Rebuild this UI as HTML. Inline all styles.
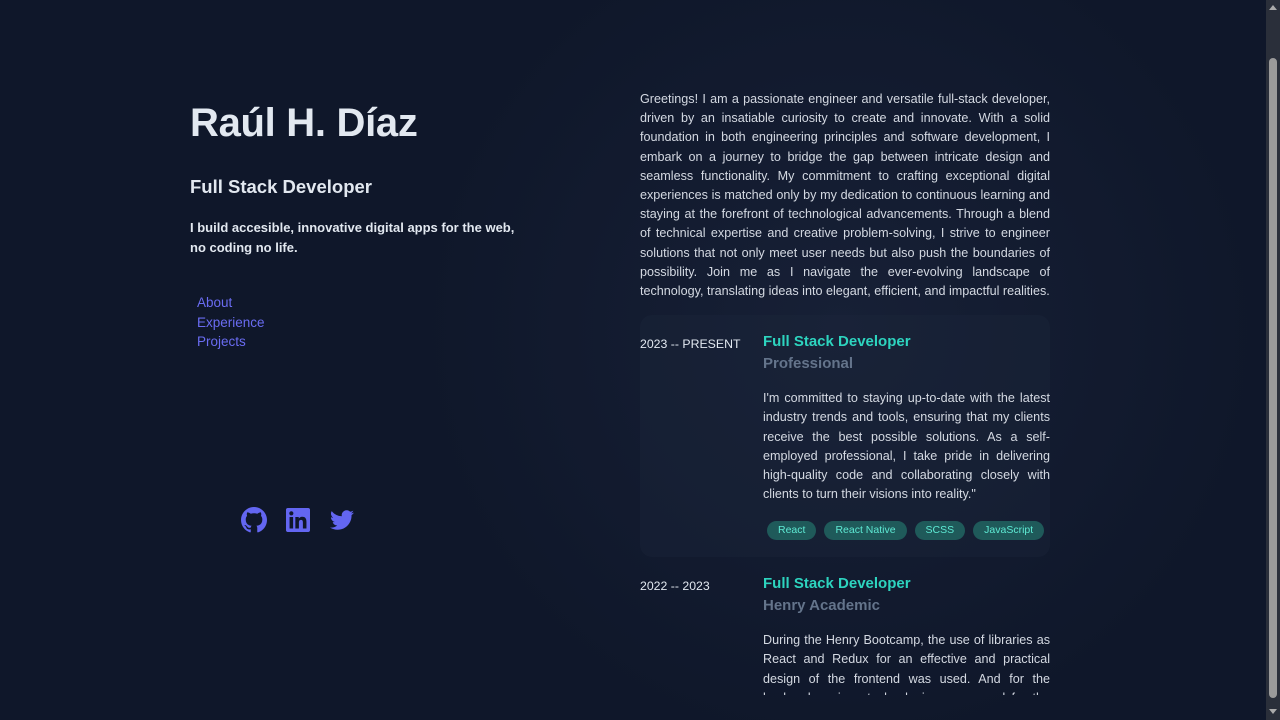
<!DOCTYPE html>
<html><head><meta charset="utf-8"><style>
*{margin:0;padding:0;box-sizing:border-box}
html,body{width:1280px;height:720px;overflow:hidden;background:#0f172a;font-family:"Liberation Sans",sans-serif;color:#e2e8f0}
body{background:radial-gradient(600px 600px at 840px 330px,#172036 0%,#0f172a 70%)}
.sb{position:absolute;right:0;top:0;width:14px;height:720px;background:#2a2f3a}
.sb i{position:absolute;left:3px;top:58px;width:8px;height:640px;background:#9a9a9a;border-radius:4px}
.sb b{position:absolute;left:3px;width:0;height:0;border-left:4px solid transparent;border-right:4px solid transparent}
h1{position:absolute;left:190px;top:101px;font-size:40px;font-weight:bold;color:#e2e8f0;letter-spacing:-0.3px}
h2{position:absolute;left:190px;top:176px;font-size:18.5px;font-weight:bold;color:#e2e8f0}
.tag{position:absolute;left:190px;top:218px;font-size:13px;font-weight:bold;line-height:19.5px;width:340px;color:#e2e8f0}
nav{position:absolute;left:197px;top:293px;font-size:13.5px;line-height:19.5px}
nav div{color:#6a6cf2}
.icons{position:absolute;left:241px;top:507px}
.icons svg{position:absolute;fill:#6366f1}
.right{position:absolute;left:640px;top:90px;width:410px;height:605px;overflow:hidden}
p{font-size:12.6px;line-height:19.2px;text-align:justify;color:#d4d9e2;font-weight:300}
.card{position:relative;margin-top:14px;border-radius:12px;background:rgba(30,41,59,.35);height:242px}
.date{position:absolute;left:0;top:22px;font-size:12.3px;color:#e2e8f0}
.c{position:absolute;left:123px;top:16px;width:287px}
.t{font-size:15px;font-weight:bold;color:#2dd4bf;line-height:22px}
.s{font-size:15px;font-weight:bold;color:#64748b;line-height:22px}
.c p{margin-top:14px}
.pills{margin-top:17px;display:flex;gap:8px;padding-left:4px;align-items:flex-start}
.pills span{white-space:nowrap;background:#1f5a5a;color:#5eead4;font-size:10.5px;padding:0 11px;border-radius:10px;line-height:19px;height:19px}
</style></head><body>
<h1>Raúl H. Díaz</h1>
<h2>Full Stack Developer</h2>
<div class="tag">I build accesible, innovative digital apps for the web, no coding no life.</div>
<nav><div>About</div><div>Experience</div><div>Projects</div></nav>
<div class="icons">
<svg style="left:0;top:0" width="26" height="26" viewBox="0 0 16 16"><path d="M8 0C3.58 0 0 3.58 0 8c0 3.540 2.29 6.53 5.47 7.59.4.07.55-.17.55-.38 0-.19-.01-.82-.01-1.49-2.01.37-2.530-.49-2.690-.94-.09-.23-.48-.94-.82-1.13-.28-.15-.68-.52-.01-.53.63-.01 1.08.58 1.23.82.72 1.21 1.87.87 2.33.66.07-.52.28-.87.51-1.07-1.78-.2-3.64-.89-3.64-3.95 0-.87.31-1.59.82-2.15-.08-.2-.36-1.02.08-2.12 0 0 .67-.21 2.2.82.64-.18 1.32-.27 2-.27.68 0 1.36.09 2 .27 1.53-1.04 2.2-.82 2.2-.82.44 1.1.16 1.92.08 2.12.51.56.82 1.27.82 2.15 0 3.07-1.87 3.75-3.65 3.95.29.25.54.73.54 1.48 0 1.07-.01 1.93-.01 2.2 0 .21.15.46.55.38A8.013 8.013 0 0016 8c0-4.42-3.58-8-8-8z"/></svg>
<svg style="left:45px;top:1px" width="24" height="24" viewBox="0 0 24 24"><path d="M20.45 20.45h-3.56v-5.57c0-1.33-.02-3.04-1.85-3.04-1.85 0-2.14 1.450-2.14 2.94v5.67H9.35V9h3.41v1.56h.05c.48-.9 1.64-1.85 3.37-1.85 3.6 0 4.27 2.37 4.27 5.46v6.28zM5.34 7.43a2.06 2.06 0 110-4.13 2.06 2.06 0 010 4.13zM7.12 20.45H3.56V9h3.56v11.45zM22.22 0H1.77C.79 0 0 .77 0 1.73v20.54C0 23.23.79 24 1.77 24h20.45c.98 0 1.78-.77 1.78-1.73V1.73C24 .77 23.2 0 22.22 0z"/></svg>
<svg style="left:88px;top:1px" width="26" height="24" viewBox="0 0 24 24"><path d="M23.95 4.57a10 10 0 01-2.82.77 4.96 4.96 0 002.16-2.72c-.95.55-2 .95-3.12 1.18a4.92 4.92 0 00-8.38 4.48A13.94 13.94 0 011.64 3.16a4.92 4.92 0 001.52 6.57 4.9 4.9 0 01-2.230-.61v.06c0 2.38 1.7 4.37 3.95 4.82a5 5 0 01-2.21.09 4.94 4.94 0 004.6 3.42A9.87 9.87 0 010 19.54a13.94 13.94 0 007.55 2.21c9.05 0 14-7.5 14-13.98 0-.21 0-.42-.02-.63A9.94 9.94 0 0024 4.59z"/></svg>
</div>
<div class="right">
<p>Greetings! I am a passionate engineer and versatile full-stack developer, driven by an insatiable curiosity to create and innovate. With a solid foundation in both engineering principles and software development, I embark on a journey to bridge the gap between intricate design and seamless functionality. My commitment to crafting exceptional digital experiences is matched only by my dedication to continuous learning and staying at the forefront of technological advancements. Through a blend of technical expertise and creative problem-solving, I strive to engineer solutions that not only meet user needs but also push the boundaries of possibility. Join me as I navigate the ever-evolving landscape of technology, translating ideas into elegant, efficient, and impactful realities.</p>
<div class="card"><div class="date">2023 -- PRESENT</div><div class="c"><div class="t">Full Stack Developer</div><div class="s">Professional</div>
<p>I'm committed to staying up-to-date with the latest industry trends and tools, ensuring that my clients receive the best possible solutions. As a self-employed professional, I take pride in delivering high-quality code and collaborating closely with clients to turn their visions into reality."</p>
<div class="pills"><span>React</span><span>React Native</span><span>SCSS</span><span>JavaScript</span></div></div></div>
<div class="card" style="margin-top:0;background:transparent"><div class="date">2022 -- 2023</div><div class="c"><div class="t">Full Stack Developer</div><div class="s">Henry Academic</div>
<p>During the Henry Bootcamp, the use of libraries as React and Redux for an effective and practical design of the frontend was used. And for the backend, various technologies were used for the development of APIs.</p></div></div>
</div>
<div class="sb"><b style="top:5px;border-bottom:5px solid #aaa"></b><i></i><b style="top:709px;border-top:5px solid #aaa"></b></div>
</body></html>
